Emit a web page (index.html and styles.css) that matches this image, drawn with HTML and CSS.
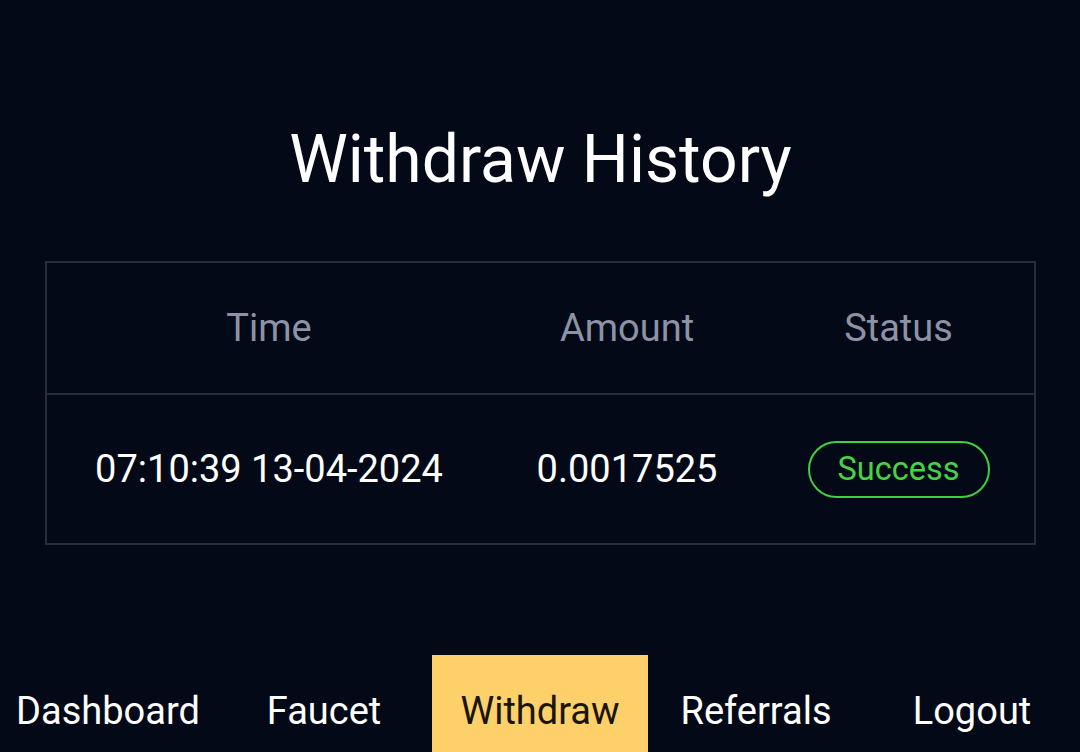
FILE: index.html
```html
<!DOCTYPE html>
<html lang="en">
<head>
<meta charset="utf-8">
<title>Withdraw History</title>
<link rel="stylesheet" href="styles.css">
</head>
<body>
<main class="page">
  <h1 class="title">Withdraw History</h1>
  <table class="history">
    <thead>
      <tr>
        <th class="col-time">Time</th>
        <th class="col-amount">Amount</th>
        <th class="col-status">Status</th>
      </tr>
    </thead>
    <tbody>
      <tr>
        <td>07:10:39 13-04-2024</td>
        <td>0.0017525</td>
        <td><span class="badge">Success</span></td>
      </tr>
    </tbody>
  </table>
</main>
<nav class="nav">
  <a class="nav-item" href="#">Dashboard</a>
  <a class="nav-item" href="#">Faucet</a>
  <a class="nav-item active" href="#">Withdraw</a>
  <a class="nav-item" href="#">Referrals</a>
  <a class="nav-item" href="#">Logout</a>
</nav>
</body>
</html>
```
FILE: styles.css
```css
html, body {
  margin: 0;
  padding: 0;
  background: #040918;
  color: #ffffff;
  font-family: Roboto, "Liberation Sans", sans-serif;
}

.page {
  padding: 0 44px 0 45px;
}

.title {
  margin: 0;
  padding-top: 121px;
  font-size: 66px;
  line-height: 77px;
  font-weight: 400;
  text-align: center;
  color: #ffffff;
}

.history {
  margin-top: 63px;
  width: 100%;
  border-collapse: collapse;
  border: 2px solid #262c3b;
  font-size: 38px;
}

.history th {
  height: 130px;
  padding: 0;
  font-weight: 400;
  color: #8c93a4;
  text-align: center;
  border-bottom: 2px solid #262c3b;
}

.col-time { width: 45%; }
.col-amount { width: 27.5%; }
.col-status { width: 27.5%; }

.history td {
  height: 148px;
  padding: 0;
  text-align: center;
  color: #ffffff;
}

.badge {
  display: inline-block;
  box-sizing: border-box;
  width: 182px;
  height: 57px;
  line-height: 53px;
  border: 2px solid #3ed13e;
  border-radius: 30px;
  color: #44d444;
  font-size: 32.5px;
}

.nav {
  display: flex;
  margin-top: 110px;
}

.nav-item {
  flex: 1;
  height: 112px;
  line-height: 112px;
  text-align: center;
  font-size: 38px;
  color: #ffffff;
  text-decoration: none;
}

.nav-item.active {
  background: #fdd069;
  color: #1b1408;
}
```
